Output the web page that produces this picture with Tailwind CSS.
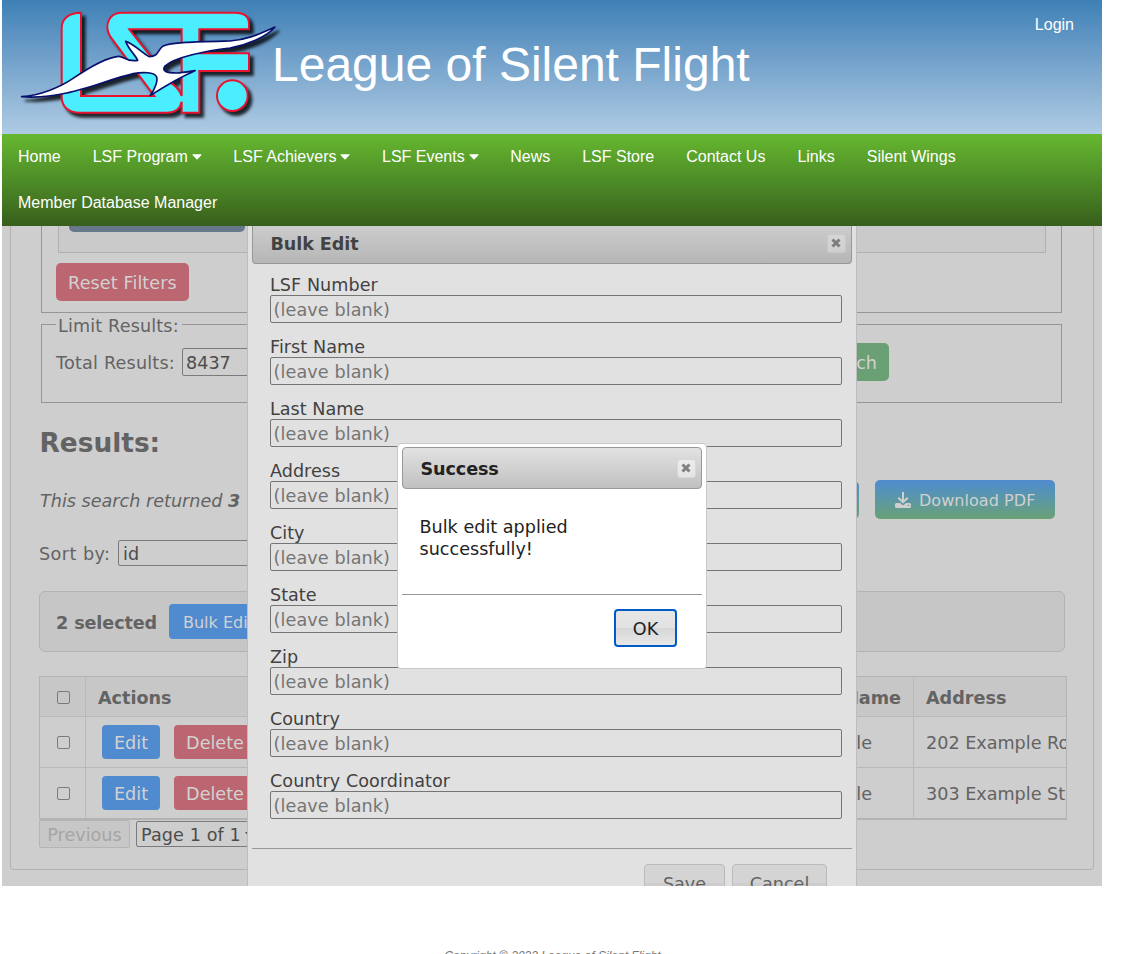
<!DOCTYPE html>
<html lang="en">
<head>
<meta charset="utf-8">
<title>League of Silent Flight</title>
<script src="https://cdn.jsdelivr.net/npm/@tailwindcss/browser@4"></script>
</head>
<body class="h-[954px] overflow-hidden bg-white">
<div class="ml-[2px] w-[1100px] font-['DejaVu_Sans',sans-serif] text-[17.6px] leading-[22px]">

  <header class="flex h-[134px] items-start bg-linear-to-b from-[#3e80b6] to-[#b0cbe3] font-['Liberation_Sans',Arial,sans-serif] text-white">
    <svg class="h-[134px] w-[288px] shrink-0 overflow-visible" viewBox="6 0 864 402">
      <g style="filter:drop-shadow(11px 12px 5px rgba(0,0,0,.8))">
        <path fill="#4aeeff" fill-rule="evenodd" stroke="#e9132f" stroke-width="6" d="M243 38C210 38 185 54 185 84V290C185 320 206 338 240 338H502C526 338 541 326 545 305V338H598V213H747V160H598V88H747V72C747 50 733 38 705 38H365C326 38 311 78 331 110L463 288H243ZM388 88L515 250Q538 266 545 288V88Z"/>
        <circle cx="697" cy="287" r="46" fill="#4aeeff" stroke="#e9132f" stroke-width="6"/>
        <path fill="#fff" stroke="#08106e" stroke-width="5" stroke-linejoin="round" d="M65 290C120 286 180 262 218 236C262 206 322 172 355 169C374 168 378 187 413 181C406 164 388 152 377 124C400 130 428 160 448 170C476 170 474 148 488 139C512 126 600 125 690 123C745 119 782 100 825 81C800 111 738 136 690 144C620 152 522 172 495 198C484 214 500 219 530 219C550 218 570 214 585 212C545 229 500 255 450 287C466 266 475 240 469 229C462 217 430 215 400 221C340 235 262 266 200 279C150 290 100 293 65 290Z"/>
      </g>
    </svg>
    <h1 class="-ml-[18px] mt-[37px] text-[48px] leading-[56px] whitespace-nowrap">League of Silent Flight</h1>
    <a class="ml-auto mr-[28px] mt-[15px] text-[16px] leading-[20px]">Login</a>
  </header>

  <nav class="flex h-[92px] flex-wrap content-start bg-linear-to-b from-[#66b82f] via-[#4e8d27] to-[#385f1c] font-['Liberation_Sans',Arial,sans-serif] text-[16px] leading-[46px] text-white">
    <a class="px-4">Home</a>
    <a class="flex items-center gap-[4px] pl-4 pr-[15.5px]">LSF Program<svg class="w-[10px] h-[6px]" viewBox="0 0 10 6"><path fill="#fff" d="M.5 1Q0 .3 1 .2H9Q10 .3 9.500 1L5.500 5.200Q5 5.700 4.500 5.200Z"/></svg></a>
    <a class="flex items-center gap-[4px] pl-4 pr-[15.5px]">LSF Achievers<svg class="w-[10px] h-[6px]" viewBox="0 0 10 6"><path fill="#fff" d="M.5 1Q0 .3 1 .2H9Q10 .3 9.500 1L5.500 5.200Q5 5.700 4.500 5.200Z"/></svg></a>
    <a class="flex items-center gap-[4px] pl-4 pr-[15.5px]">LSF Events<svg class="w-[10px] h-[6px]" viewBox="0 0 10 6"><path fill="#fff" d="M.5 1Q0 .3 1 .2H9Q10 .3 9.500 1L5.500 5.200Q5 5.700 4.500 5.200Z"/></svg></a>
    <a class="px-4">News</a>
    <a class="px-4">LSF Store</a>
    <a class="px-4">Contact Us</a>
    <a class="px-4">Links</a>
    <a class="px-4">Silent Wings</a>
    <a class="px-4">Member Database Manager</a>
  </nav>

  <main class="relative h-[660px] overflow-hidden bg-[#cecece] px-[8px] text-[#636363]">
    <div class="h-[644px] rounded-b-[4px] border border-t-0 border-[#b3b3b3] px-[28px]">
      <!-- filters -->
      <section class="ml-[2px] h-[87px] w-[1021px] border border-t-0 border-[#969696] px-[14px]">
        <div class="ml-[2px] h-[27px] w-[988px] border border-t-0 border-[#b1b1b1] bg-[#cacaca] pl-[10px]">
          <div class="h-[6px] w-[176px] rounded-b-[5px] bg-[#68788c]"></div>
        </div>
        <button class="mt-[10px] h-[38px] w-[133px] rounded-[5px] bg-[#bb6670] pt-[2px] tracking-[0.1px] text-[#d2d2d2]">Reset Filters</button>
      </section>
      <!-- limit -->
      <section class="relative ml-[2px] mt-[11px] flex h-[79px] w-[1021px] items-start border border-[#969696] pl-[14px] pt-[18px]">
        <span class="absolute left-[14px] top-[-10px] bg-[#cecece] pl-[2px] pr-[3px] tracking-[0.15px]">Limit Results:</span>
        <label class="mt-[9px] w-[126px] whitespace-nowrap tracking-[0.2px]">Total Results:</label>
        <div class="mt-[5px] h-[28px] w-[180px] rounded-[2px] border border-[#7b7b7b] px-[3px] leading-[28px] text-[#4c4c4c]">8437</div>
        <button class="ml-auto mr-[172px] h-[38px] w-[90px] rounded-[5px] bg-[#6aa074] pr-[12px] pt-[2px] text-right text-[#d2d2d2]">Search</button>
      </section>
      <h2 class="pl-[0.5px] mt-[23px] text-[26.4px] font-bold leading-[34px]">Results:</h2>
      <div class="mt-[20px] flex h-[39px] items-center">
        <p class="pl-px pt-[2px] italic whitespace-nowrap">This search returned <b>3</b></p>
        <div class="ml-auto mr-[16px] h-[38px] w-[160px] rounded-[5px] bg-linear-to-b from-[#508bcf] to-[#6aa074]"></div>
        <div class="mr-[10px] flex h-[39px] w-[180px] items-center rounded-[5px] bg-linear-to-b from-[#508bcf] to-[#6aa074] pl-[20px] pt-px text-[16px] text-[#d0d0d0] whitespace-nowrap tracking-[0.05px]">
          <svg class="mr-[8px] h-[16px] w-[16px] shrink-0" viewBox="0 0 16 16" fill="none"><path d="M8 0V10M3.300 5.700L8 10.200L12.700 5.700" stroke="#d0d0d0" stroke-width="2"/><path fill="#d0d0d0" d="M1.500 11H5L7 12.800Q8 13.500 9 12.800L11 11H14.500Q16 11 16 12.500V14.500Q16 16 14.500 16H1.500Q0 16 0 14.500V12.500Q0 11 1.500 11Z"/><circle cx="13.500" cy="13.500" r=".8" fill="#5e9a87"/></svg><span class="pt-[2px]">Download PDF</span>
        </div>
      </div>
      <div class="mt-[20px] flex h-[28px] items-center">
        <label class="w-[79px] whitespace-nowrap pt-px tracking-[0.45px]">Sort by:</label>
        <div class="h-[26px] w-[200px] rounded-[2px] border border-[#7b7b7b] px-[4px] leading-[26px] text-[#4c4c4c]">id</div>
      </div>
      <div class="mt-[24px] flex h-[61px] w-[1026px] items-center rounded-[6px] border border-[#b3b3b3] bg-[#c6c6c6] pl-[16px]">
        <b class="w-[113px] whitespace-nowrap pt-[2px] tracking-[-0.1px]">2 selected</b>
        <button class="h-[35px] w-[110px] rounded-[4px] bg-[#508bcf] pl-[14px] pt-[2px] text-left text-[16px] text-[#d2d2d2]">Bulk Edit</button>
      </div>
      <!-- members -->
      <div class="mt-[24px] h-[144px] w-[1028px] overflow-hidden border border-b-2 border-[#b3b3b3]">
        <div class="flex h-[40px] border-b border-[#b9b9b9] bg-[#c7c7c7] font-bold leading-[42px]">
          <div class="flex w-[46px] shrink-0 items-center justify-center border-r border-[#b9b9b9]"><i class="ml-[2px] mt-[2px] size-[13px] rounded-[2px] border border-[#7b7b7b]"></i></div>
          <div class="w-[350px] shrink-0 pl-[12px]">Actions</div>
          <div class="w-[478px] shrink-0 border-r border-[#b9b9b9] pr-[12px] text-right">Last Name</div>
          <div class="pl-[12px]">Address</div>
        </div>
        <div class="flex h-[51px] border-b border-[#b9b9b9] leading-[52px]">
          <div class="flex w-[46px] shrink-0 items-center justify-center border-r border-[#b9b9b9]"><i class="ml-[2px] size-[13px] rounded-[2px] border border-[#7b7b7b]"></i></div>
          <div class="flex w-[350px] shrink-0 items-center gap-[14px] pl-[16px] leading-[22px] text-[#d2d2d2]"><button class="h-[34px] w-[58px] rounded-[4px] bg-[#508bcf] pt-px">Edit</button><button class="h-[34px] w-[82px] rounded-[4px] bg-[#bb6670] pt-px">Delete</button></div>
          <div class="w-[478px] shrink-0 border-r border-[#b9b9b9] pr-[41px] text-right">Example</div>
          <div class="pl-[12px] whitespace-nowrap">202 Example Road</div>
        </div>
        <div class="flex h-[51px] border-b border-[#b9b9b9] leading-[52px]">
          <div class="flex w-[46px] shrink-0 items-center justify-center border-r border-[#b9b9b9]"><i class="ml-[2px] size-[13px] rounded-[2px] border border-[#7b7b7b]"></i></div>
          <div class="flex w-[350px] shrink-0 items-center gap-[14px] pl-[16px] leading-[22px] text-[#d2d2d2]"><button class="h-[34px] w-[58px] rounded-[4px] bg-[#508bcf] pt-px">Edit</button><button class="h-[34px] w-[82px] rounded-[4px] bg-[#bb6670] pt-px">Delete</button></div>
          <div class="w-[478px] shrink-0 border-r border-[#b9b9b9] pr-[41px] text-right">Example</div>
          <div class="pl-[12px] whitespace-nowrap">303 Example Street</div>
        </div>
      </div>
      <div class="flex gap-[6px]">
        <div class="h-[28px] w-[91px] rounded-[2px] border border-[#b5b5b5] bg-[#c7c7c7] text-center leading-[28px] text-[#a5a5a5]">Previous</div>
        <div class="mt-px flex h-[26px] w-[130px] items-center rounded-[2px] border border-[#7b7b7b] pl-[4px] pt-px tracking-[0.1px] text-[#4c4c4c] whitespace-nowrap">Page 1 of 1<svg class="ml-[4px] h-[5px] w-[8px]" viewBox="0 0 8 5"><path d="M0 0H8L4 5Z" fill="#4c4c4c"/></svg></div>
      </div>
    </div>

    <!-- bulk edit dialog -->
    <div class="absolute left-[245px] top-0 h-[700px] w-[610px] border-x border-[#bdbdbd] bg-[#e1e1e1] px-[4px] text-[#424242]">
      <div class="flex h-[38px] items-center rounded-b-[4px] border border-t-0 border-[#979797] bg-linear-to-b from-[#cccccc] to-[#b6b6b6] pl-[17.5px] pr-[5.5px]">
        <b class="-mt-[2px] tracking-[-0.1px]">Bulk Edit</b>
        <span class="-mt-[3px] ml-auto grid size-[19px] place-items-center rounded-[3px] border border-[#c9c9c9] bg-linear-to-b from-[#d6d6d6] to-[#cfcfcf]"><svg class="size-[10px]" viewBox="0 0 10 10"><path d="M1.500 1.500L8.500 8.500M8.500 1.500L1.500 8.500" stroke="#7d7d7d" stroke-width="3"/></svg></span>
      </div>
      <div class="h-[585px] border-b border-[#979797] pl-[18px] pr-[10px] pt-[9px]">
        <div class="mb-[12px] h-[50px]"><label class="block h-[22px] leading-[25px] tracking-[0.05px]">LSF Number</label><div class="h-[28px] rounded-[2px] border border-[#757575] pl-[2.5px] leading-[29px] tracking-[0.1px] text-[#757575]">(leave blank)</div></div>
        <div class="mb-[12px] h-[50px]"><label class="block h-[22px] leading-[25px] tracking-[0.05px]">First Name</label><div class="h-[28px] rounded-[2px] border border-[#757575] pl-[2.5px] leading-[29px] tracking-[0.1px] text-[#757575]">(leave blank)</div></div>
        <div class="mb-[12px] h-[50px]"><label class="block h-[22px] leading-[25px]">Last Name</label><div class="h-[28px] rounded-[2px] border border-[#757575] pl-[2.5px] leading-[29px] tracking-[0.1px] text-[#757575]">(leave blank)</div></div>
        <div class="mb-[12px] h-[50px]"><label class="block h-[22px] leading-[25px]">Address</label><div class="h-[28px] rounded-[2px] border border-[#757575] pl-[2.5px] leading-[29px] tracking-[0.1px] text-[#757575]">(leave blank)</div></div>
        <div class="mb-[12px] h-[50px]"><label class="block h-[22px] leading-[25px]">City</label><div class="h-[28px] rounded-[2px] border border-[#757575] pl-[2.5px] leading-[29px] tracking-[0.1px] text-[#757575]">(leave blank)</div></div>
        <div class="mb-[12px] h-[50px]"><label class="block h-[22px] leading-[25px]">State</label><div class="h-[28px] rounded-[2px] border border-[#757575] pl-[2.5px] leading-[29px] tracking-[0.1px] text-[#757575]">(leave blank)</div></div>
        <div class="mb-[12px] h-[50px]"><label class="block h-[22px] leading-[25px]">Zip</label><div class="h-[28px] rounded-[2px] border border-[#757575] pl-[2.5px] leading-[29px] tracking-[0.1px] text-[#757575]">(leave blank)</div></div>
        <div class="mb-[12px] h-[50px]"><label class="block h-[22px] leading-[25px]">Country</label><div class="h-[28px] rounded-[2px] border border-[#757575] pl-[2.5px] leading-[29px] tracking-[0.1px] text-[#757575]">(leave blank)</div></div>
        <div class="mb-[12px] h-[50px]"><label class="block h-[22px] leading-[25px] tracking-[0.05px]">Country Coordinator</label><div class="h-[28px] rounded-[2px] border border-[#757575] pl-[2.5px] leading-[29px] tracking-[0.1px] text-[#757575]">(leave blank)</div></div>
      </div>
      <div class="flex justify-end gap-[7px] pr-[25px] pt-[15px] text-[#636363]">
        <button class="h-[38px] w-[81px] rounded-[4px] border border-[#bababa] bg-linear-to-b from-[#d4d4d4] from-50% to-[#cdcdcd] to-50% pt-[2px]">Save</button>
        <button class="h-[38px] w-[95px] rounded-[4px] border border-[#bababa] bg-linear-to-b from-[#d4d4d4] from-50% to-[#cdcdcd] to-50% pt-[2px]">Cancel</button>
      </div>
    </div>

    <!-- success dialog -->
    <div class="absolute left-[395px] top-[217px] h-[226px] w-[310px] rounded-[4px] border border-[#c8c8c8] bg-white px-[4px] pt-[3px] text-[#222]">
      <div class="flex h-[42px] items-center rounded-[4px] border border-[#999] bg-linear-to-b from-[#e2e2e2] to-[#c0c0c0] pl-[17.5px] pr-[5.5px]">
        <b class="pt-[2px] tracking-[-0.1px]">Success</b>
        <span class="ml-auto grid size-[19px] place-items-center rounded-[3px] border border-[#d8d8d8] bg-linear-to-b from-[#ececec] to-[#e4e4e4]"><svg class="size-[10px]" viewBox="0 0 10 10"><path d="M1.500 1.500L8.500 8.500M8.500 1.500L1.500 8.500" stroke="#808080" stroke-width="3"/></svg></span>
      </div>
      <p class="h-[106px] border-b border-[#999] pl-[17.5px] pt-[27px]">Bulk edit applied<br>successfully!</p>
      <div class="flex justify-end pr-[25px] pt-[14px]">
        <button class="h-[38px] w-[63px] rounded-[4px] border-2 border-[#005bc9] bg-[linear-gradient(#e6e6e6,#e2e2e2_50%,#d7d7d7_50%,#e8e8e8)] pt-[2px]">OK</button>
      </div>
    </div>
  </main>

  <footer class="pt-[63px] pl-px text-center font-['Liberation_Sans',Arial,sans-serif] text-[12px] italic leading-[15px] text-[#777]">Copyright © 2022 League of Silent Flight</footer>
</div>
</body>
</html>
